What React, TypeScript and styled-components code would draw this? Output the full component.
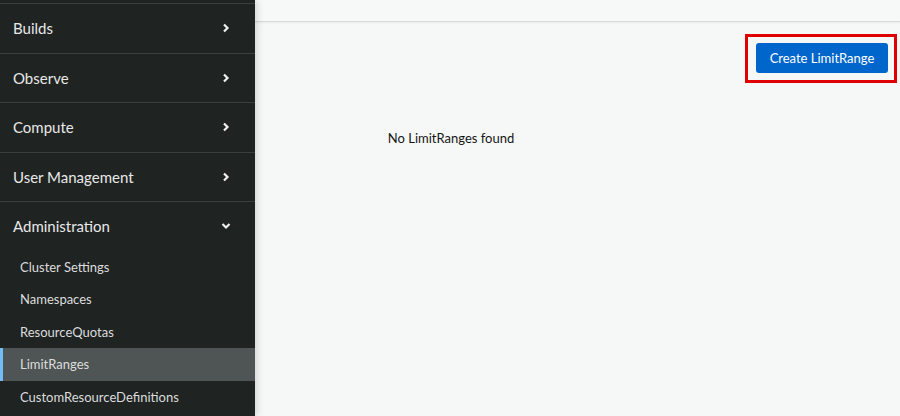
import React from "react";
import styled, { createGlobalStyle } from "styled-components";

const Global = createGlobalStyle`
  html, body { margin: 0; padding: 0; }
  body { font-family: Lato, "Open Sans", sans-serif; background: #f5f8f7; }
  #root { width: 900px; height: 416px; overflow: hidden; }
`;

const Page = styled.div`
  display: flex;
  width: 900px;
  height: 416px;
  overflow: hidden;
`;

const Sidebar = styled.nav`
  width: 255px;
  flex-shrink: 0;
  background: #1f2322;
  padding-top: 3px;
  box-sizing: border-box;
  position: relative;
  z-index: 1;
  box-shadow: 3px 0 6px rgba(3, 3, 3, 0.12);
`;

const NavGroup = styled.div`
  border-top: 1px solid #3a3e3d;
`;

const NavHeader = styled.div`
  height: 48.5px;
  display: flex;
  align-items: center;
  justify-content: space-between;
  padding: 0 24px 0 13px;
  color: #e8e8e8;
  font-size: 15px;
`;

const SubList = styled.ul`
  list-style: none;
  margin: 0;
  padding: 0;
`;

const SubItem = styled.li<{ $active?: boolean }>`
  height: 32.5px;
  display: flex;
  align-items: center;
  padding-left: ${(p) => (p.$active ? "17px" : "20px")};
  border-left: ${(p) => (p.$active ? "3px solid #73bcf7" : "none")};
  background: ${(p) => (p.$active ? "#4f5454" : "transparent")};
  color: #dcdcdc;
  font-size: 13px;
`;

const Main = styled.main`
  flex: 1;
  display: flex;
  flex-direction: column;
  background: #f5f8f7;
`;

const Header = styled.div`
  height: 21px;
  flex-shrink: 0;
  border-bottom: 1px solid #d8dbdb;
  box-shadow: 0 1px 2px rgba(0, 0, 0, 0.06);
  background: #f6f9f8;
`;

const Toolbar = styled.div`
  display: flex;
  justify-content: flex-end;
  padding: 12px 3px 0 0;
`;

const Highlight = styled.div`
  border: 3px solid #e00000;
  padding: 6px 6px 7px 8px;
`;

const PrimaryButton = styled.button`
  height: 30px;
  width: 132px;
  border: none;
  border-radius: 3px;
  background: #0066cc;
  color: #ffffff;
  font-family: Lato, "Open Sans", sans-serif;
  font-size: 13px;
  padding: 0;
  cursor: pointer;
`;

const EmptyState = styled.div`
  width: 392px;
  text-align: center;
  margin-top: 47px;
  color: #151515;
  font-size: 13px;
`;

const Chevron = ({ down }: { down?: boolean }) => (
  <svg width="10" height="10" viewBox="0 0 10 10">
    {down ? (
      <polyline points="1.5,3 5,6.5 8.5,3" fill="none" stroke="#f0f0f0" strokeWidth="2.2" />
    ) : (
      <polyline points="3,1.5 6.5,5 3,8.5" fill="none" stroke="#f0f0f0" strokeWidth="2.2" />
    )}
  </svg>
);

const groups = ["Builds", "Observe", "Compute", "User Management"];
const subs = ["Cluster Settings", "Namespaces", "ResourceQuotas", "LimitRanges", "CustomResourceDefinitions"];

export default function App() {
  return (
    <>
      <Global />
      <Page>
        <Sidebar>
          {groups.map((g) => (
            <NavGroup key={g}>
              <NavHeader>
                <span>{g}</span>
                <Chevron />
              </NavHeader>
            </NavGroup>
          ))}
          <NavGroup>
            <NavHeader>
              <span>Administration</span>
              <Chevron down />
            </NavHeader>
            <SubList>
              {subs.map((s) => (
                <SubItem key={s} $active={s === "LimitRanges"}>
                  {s}
                </SubItem>
              ))}
            </SubList>
          </NavGroup>
        </Sidebar>
        <Main>
          <Header />
          <Toolbar>
            <Highlight>
              <PrimaryButton>Create LimitRange</PrimaryButton>
            </Highlight>
          </Toolbar>
          <EmptyState>No LimitRanges found</EmptyState>
        </Main>
      </Page>
    </>
  );
}
